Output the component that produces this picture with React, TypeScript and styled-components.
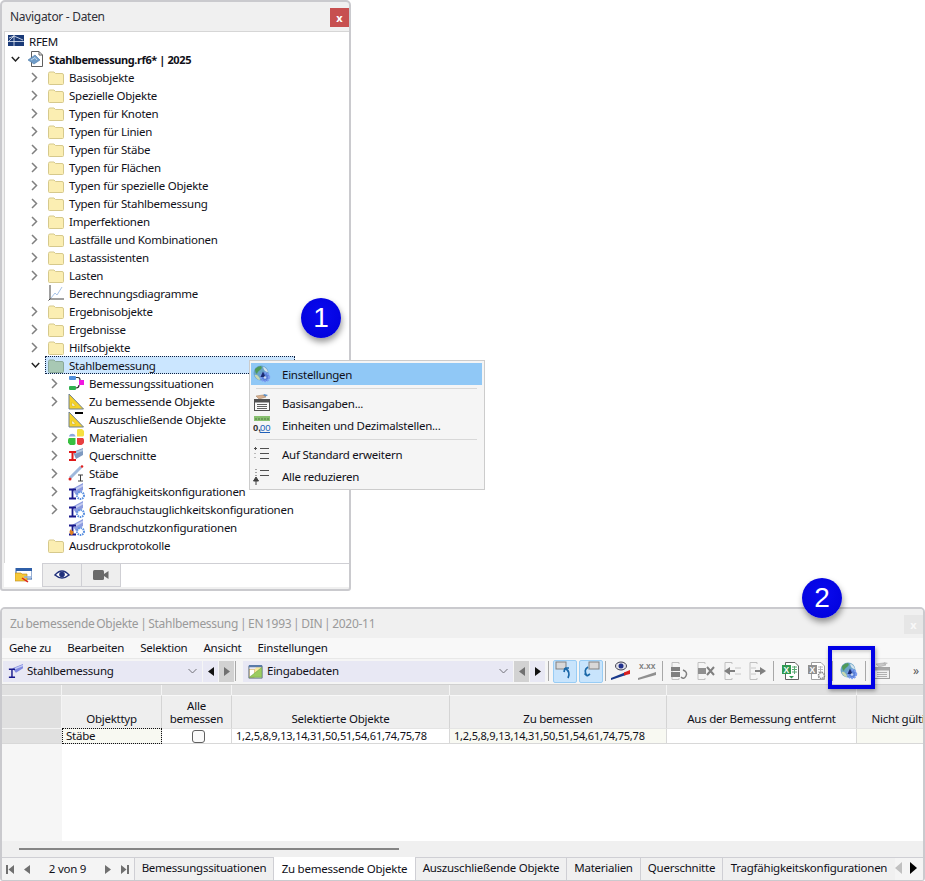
import React from "react";
import styled, { createGlobalStyle } from "styled-components";

const Global = createGlobalStyle`
  html, body { margin: 0; padding: 0; background: #fff; }
  body { font-family: "Noto Sans", "Liberation Sans", sans-serif; font-size: 11.5px; letter-spacing: -0.25px; color: #101018; }
  svg { display: block; flex: none; }
  svg text { letter-spacing: 0; }
`;

const Page = styled.div`
  position: relative;
  width: 925px;
  height: 881px;
  overflow: hidden;
  display: flex;
  flex-direction: column;
  background: #fff;
`;

/* ---------- Navigator ---------- */
const Navigator = styled.section`
  width: 351px;
  height: 591px;
  box-sizing: border-box;
  border: 2px solid #cacace;
  border-radius: 5px 5px 3px 3px;
  background: #f0f0f0;
  display: flex;
  flex-direction: column;
`;
const NavHeader = styled.header`
  height: 29px;
  flex: none;
  display: flex;
  align-items: center;
  justify-content: space-between;
  padding: 0 0 0 8px;
  font-size: 12px;
  letter-spacing: -0.3px;
  color: #303038;
`;
const CloseBox = styled.button<{ $idle?: boolean }>`
  width: 19px;
  height: 19px;
  margin-top: 1px;
  padding: 0;
  border: 0;
  background: ${(p) => (p.$idle ? "#e6e6e6" : "#c75050")};
  color: ${(p) => (p.$idle ? "#f8f8f8" : "#fff")};
  font: bold 11px "Noto Sans", sans-serif;
  line-height: 17px;
  text-align: center;
`;
const Tree = styled.div`
  flex: 1;
  margin: 0 0 0 2px;
  background: #fff;
  border: 1px solid #d6d6d6;
  border-right: 0;
  border-bottom: 0;
`;
const Row = styled.div<{ $level: number }>`
  height: 18px;
  display: flex;
  align-items: center;
  padding-left: ${(p) => 3 + p.$level * 20}px;
`;
const Slot = styled.span`
  width: 20px;
  height: 18px;
  flex: none;
  display: flex;
  align-items: center;
  padding-left: 3px;
  box-sizing: border-box;
`;
const RowContent = styled.span<{ $selected?: boolean }>`
  display: flex;
  align-items: center;
  height: 18px;
  box-sizing: border-box;
  margin-left: -3px;
  padding-left: 3px;
  gap: 5px;
  white-space: nowrap;
  ${(p) =>
    p.$selected &&
    `width: 250px; background: #cbe6ff; outline: 1px dotted #102040; outline-offset: -1px;`}
`;
const IconBox = styled.span`
  width: 16px;
  height: 18px;
  flex: none;
  display: flex;
  align-items: center;
`;
const Bold = styled.span`
  font-weight: 700;
  font-size: 11px;
  letter-spacing: -0.4px;
`;
const NavTabs = styled.nav`
  height: 24px;
  flex: none;
  display: flex;
  margin: 0 0 2px 2px;
`;
const NavTab = styled.button<{ $active?: boolean }>`
  width: 39px;
  box-sizing: border-box;
  padding: 0;
  display: flex;
  align-items: center;
  justify-content: center;
  background: ${(p) => (p.$active ? "#fff" : "#eeeeee")};
  border: 1px solid #cfcfd4;
  border-width: ${(p) => (p.$active ? "0 1px 0 0" : "1px 1px 1px 0")};
`;
const NavTabFill = styled.div`
  flex: 1;
  background: #fff;
  border-top: 1px solid #cfcfd4;
`;

/* ---------- Context menu ---------- */
const ContextMenu = styled.div`
  position: absolute;
  left: 249px;
  top: 360px;
  width: 236px;
  height: 130px;
  box-sizing: border-box;
  padding: 2px 2px 0 1px;
  background: #f5f5f5;
  border: 1px solid #cccccc;
`;
const MenuItem = styled.div<{ $active?: boolean }>`
  height: 22px;
  display: flex;
  align-items: center;
  padding-left: 2px;
  gap: 11px;
  background: ${(p) => (p.$active ? "#90c8f6" : "transparent")};
`;
const MenuRule = styled.div`
  height: 1px;
  margin: 3px 5px 3px 5px;
  background: #d8d8d8;
`;

/* ---------- Badges ---------- */
const Badge = styled.div<{ $x: number; $y: number }>`
  position: absolute;
  left: ${(p) => p.$x}px;
  top: ${(p) => p.$y}px;
  width: 40px;
  height: 40px;
  border-radius: 50%;
  background: radial-gradient(circle at 50% 40%, #0a0af0, #0000d8);
  color: #fff;
  font: 400 28px/39px "Liberation Sans", sans-serif;
  letter-spacing: 0;
  text-align: center;
  box-shadow: 1px 4px 6px rgba(0, 0, 0, 0.4);
`;
const Highlight = styled.div`
  position: absolute;
  left: 828px;
  top: 646px;
  width: 47px;
  height: 43px;
  box-sizing: border-box;
  border: 4px solid #0000e6;
  box-shadow: 1px 2px 4px rgba(0, 0, 0, 0.35), inset 0 2px 3px rgba(0, 0, 0, 0.15);
`;

/* ---------- Table panel ---------- */
const TablePanel = styled.section`
  width: 925px;
  height: 274px;
  margin-top: 16px;
  box-sizing: border-box;
  border: 2px solid #cacace;
  border-bottom-width: 1px;
  border-radius: 5px 5px 3px 3px;
  background: #f8f8f8;
  display: flex;
  flex-direction: column;
  overflow: hidden;
`;
const PanelHeader = styled.header`
  height: 29px;
  flex: none;
  display: flex;
  align-items: center;
  justify-content: space-between;
  padding: 0 0 0 8px;
  background: #f0f0f0;
  font-size: 12px;
  letter-spacing: -0.3px;
  word-spacing: -1px;
  color: #9a9a9a;
`;
const MenuBar = styled.div`
  height: 20px;
  flex: none;
  box-sizing: border-box;
  display: flex;
  align-items: center;
  gap: 16px;
  padding: 0 0 2px 7px;
  background: #f8f8f8;
`;
const Toolbar = styled.div`
  height: 27px;
  flex: none;
  box-sizing: border-box;
  display: flex;
  align-items: center;
  padding: 0 0 1px 1px;
  background: #f5f5f5;
  border-top: 1px solid #e8e8e8;
  border-bottom: 1px solid #d0d0d0;
  overflow: hidden;
`;
const Combo = styled.div<{ $width: number }>`
  width: ${(p) => p.$width}px;
  height: 21px;
  flex: none;
  box-sizing: border-box;
  display: flex;
  align-items: center;
  gap: 4px;
  padding: 0 5px 0 5px;
  background: #e8e8f4;
`;
const ComboText = styled.span`
  flex: 1;
  padding-bottom: 2px;
`;
const StepButton = styled.button<{ $dim?: boolean }>`
  width: 15px;
  height: 21px;
  flex: none;
  margin-left: 1px;
  padding: 0;
  border: 0;
  display: flex;
  align-items: center;
  justify-content: center;
  background: ${(p) => (p.$dim ? "#d2d2d2" : "#e8e8f4")};
`;
const ToolRule = styled.span<{ $left: number; $right: number }>`
  width: 1px;
  height: 20px;
  flex: none;
  margin: 0 ${(p) => p.$right}px 0 ${(p) => p.$left}px;
  background: #a8a8a8;
`;
const Toggle = styled.button`
  width: 24px;
  height: 23px;
  flex: none;
  margin-right: 2px;
  padding: 0;
  display: flex;
  align-items: center;
  justify-content: center;
  background: #c8e4fc;
  border: 1px solid #98ccf4;
  border-radius: 2px;
`;
const ToolIcon = styled.span<{ $gap?: number }>`
  width: 20px;
  height: 22px;
  flex: none;
  margin-right: ${(p) => p.$gap ?? 0}px;
  display: flex;
  align-items: center;
  justify-content: flex-start;
`;
const More = styled.span`
  margin-left: 20px;
  color: #555;
  font-size: 12px;
  line-height: 12px;
`;
const Grid = styled.div`
  height: 156px;
  flex: none;
  display: grid;
  grid-template-columns: 60px 100px 70px 218px 217px 190px 90px;
  grid-template-rows: 10px 33px 16px 1fr;
  background: #fff;
  overflow: hidden;
`;
const TopCell = styled.div`
  background: #e0e0e0;
  border-right: 1px solid #f4f4f4;
`;
const CornerCell = styled.div`
  background: #e0e0e0;
  border-right: 1px solid #f4f4f4;
  border-top: 1px solid #f4f4f4;
`;
const HeadCell = styled.div`
  box-sizing: border-box;
  background: #eeeeee;
  border-right: 1px solid #d4d4d4;
  border-top: 1px solid #f8f8f8;
  display: flex;
  align-items: flex-end;
  justify-content: center;
  text-align: center;
  line-height: 13px;
  padding-bottom: 3px;
  white-space: nowrap;
`;
const RowHead = styled.div`
  background: #e0e0e0;
  border-top: 1px solid #f4f4f4;
  border-bottom: 1px solid #d8d8d8;
`;
const DataCell = styled.div<{ $tint?: boolean; $focus?: boolean; $center?: boolean; $list?: boolean }>`
  box-sizing: border-box;
  display: flex;
  align-items: center;
  justify-content: ${(p) => (p.$center ? "center" : "flex-start")};
  padding: 0 0 ${(p) => (p.$center ? "0" : "2px")} 4px;
  white-space: nowrap;
  background: ${(p) => (p.$tint ? "#f8f9f2" : "#fff")};
  border-right: 1px solid #d8d8d8;
  border-top: 1px solid #e4e4e4;
  border-bottom: 1px solid #d8d8d8;
  ${(p) => p.$list && `font-size: 11px; letter-spacing: -0.2px;`}
  ${(p) => p.$focus && `outline: 1px dotted #101010; outline-offset: -1px;`}
`;
const CheckBox = styled.span`
  width: 13px;
  height: 13px;
  box-sizing: border-box;
  border: 1px solid #606060;
  border-radius: 3px;
  background: #fafafa;
`;
const FillerHead = styled.div`
  background: #f6f6f6;
`;
const FillerBody = styled.div`
  grid-column: 2 / -1;
  background: #fff;
`;
const ScrollRow = styled.div`
  height: 16px;
  flex: none;
  box-sizing: border-box;
  padding: 7px 0 0 17px;
  background: #f0f0f0;
`;
const ScrollThumb = styled.div`
  width: 380px;
  height: 2px;
  background: #858585;
`;
const TabBar = styled.div`
  flex: 1;
  display: flex;
  background: #f4f4f4;
  border-top: 1px solid #cfcfd4;
`;
const Pager = styled.div`
  width: 132px;
  flex: none;
  box-sizing: border-box;
  display: flex;
  align-items: center;
  justify-content: space-between;
  padding: 0 5px 0 4px;
`;
const PagerGroup = styled.span`
  display: flex;
  align-items: center;
  gap: 10px;
`;
const PagerText = styled.span`
  font-size: 11.5px;
  padding-bottom: 1px;
`;
const SheetTab = styled.div<{ $width: number; $active?: boolean }>`
  width: ${(p) => p.$width}px;
  flex: none;
  box-sizing: border-box;
  display: flex;
  align-items: center;
  justify-content: center;
  white-space: nowrap;
  padding-bottom: 3px;
  background: ${(p) => (p.$active ? "#fff" : "#f0f0f0")};
  border-left: 1px solid #cfcfd4;
  ${(p) => p.$active && `margin-top: -1px; padding-bottom: 1px;`}
`;
const TabArrows = styled.div`
  flex: 1;
  display: flex;
  align-items: center;
  justify-content: flex-end;
  gap: 8px;
  padding: 0 6px 2px 0;
`;

/* ---------- Icons ---------- */
const Chevron = ({ open }: { open?: boolean }) =>
  open ? (
    <svg width="9" height="7" viewBox="0 0 9 7">
      <path d="M.8 1 4.500 5 8.200 1" fill="none" stroke="#222" strokeWidth="1.500" />
    </svg>
  ) : (
    <svg width="7" height="11" viewBox="0 0 7 11">
      <path d="M1 1 5.500 5.500 1 10" fill="none" stroke="#808080" strokeWidth="1.500" />
    </svg>
  );
const ComboChevron = () => (
  <svg width="9" height="6" viewBox="0 0 9 6">
    <path d="M.5 1 4.500 5 8.500 1" fill="none" stroke="#707078" />
  </svg>
);
const Folder = ({ green }: { green?: boolean }) => (
  <svg width="16" height="16" viewBox="0 -1 16 16">
    <path
      d="M.5 3.500Q.5 2 2 2H6L7.500 3.500H14Q15.500 3.500 15.500 5V13.500Q15.500 14.500 14.500 14.500H1.500Q.5 14.500.5 13.500Z"
      fill={green ? "#a8c8b4" : "#fbeeb2"}
      stroke={green ? "#8aa898" : "#d6c98c"}
    />
  </svg>
);
const RfemLogo = () => (
  <svg width="16" height="12" viewBox="0 0 16 12">
    <rect width="16" height="11" fill="#1a3a78" />
    <path d="M0 6.500H16M6 0V11M1 6 6 1 15 5M6 1 1 3" stroke="#e8eef8" strokeWidth=".8" fill="none" />
  </svg>
);
const FileIcon = () => (
  <svg width="16" height="16" viewBox="0 0 16 16">
    <path d="M3.500.5H11L14.500 4V15.500H3.500Z" fill="#fff" stroke="#606060" />
    <path d="M11 .5V4H14.500" fill="none" stroke="#606060" />
    <path d="M0 9 7 4 12 9 6 13Z" fill="#6f9cc8" stroke="#4a78a8" strokeWidth=".6" />
    <path d="M3 9 7 6.500 9 9" fill="none" stroke="#dbe8f4" strokeWidth=".8" />
  </svg>
);
const SituationIcon = () => (
  <svg width="17" height="16" viewBox="0 0 17 16">
    <rect x="1" y="1" width="7" height="4" rx="1" fill="#4f8fdc" />
    <rect x="1" y="11" width="7" height="4" rx="1" fill="#30b050" />
    <rect x="11" y="5" width="5" height="5" fill="#f018e0" />
    <path d="M8 2.500H10Q12 2.500 12 5M11 10Q11 13 8 13" fill="none" stroke="#303030" strokeWidth="1.200" />
  </svg>
);
const SquareIcon = ({ dash }: { dash?: boolean }) => (
  <svg width="17" height="17" viewBox="0 0 17 17">
    <path d="M1 1V16H15.500Z" fill="#f6d22a" stroke="#6f8090" strokeWidth="1" />
    <path d="M4 9.500V13H7.500Z" fill="#fff" stroke="#c0a820" strokeWidth=".5" />
    {dash && <rect x="7" y="1" width="8" height="2" fill="#000" />}
  </svg>
);
const MaterialIcon = () => (
  <svg width="16" height="16" viewBox="0 0 16 16">
    <path d="M1 7A3.500 3.500 0 0 1 7.500 7V7.500H1Z" fill="#8ca8e0" />
    <path d="M9 .8A3.500 3.500 0 0 1 15 7.500H9Z" fill="#f6e040" />
    <path d="M1 9H7.500V15A3.500 3.500 0 0 1 1 9Z" fill="#38c040" />
    <path d="M9 9H15A3.500 3.500 0 0 1 9 15Z" fill="#e84040" />
  </svg>
);
const SectionIcon = () => (
  <svg width="17" height="16" viewBox="0 0 17 16">
    <path d="M5 5 15 1V8L8 12Z" fill="#7f9ac0" />
    <path d="M7 5 15 2V4L7 7Z" fill="#b4c8e0" />
    <path d="M1 5H8M1 13H8M4.500 5V13" stroke="#e01818" strokeWidth="2" fill="none" />
  </svg>
);
const MemberIcon = () => (
  <svg width="17" height="17" viewBox="0 0 17 17">
    <path d="M2 13 13 2" stroke="#9fb8dc" strokeWidth="3" />
    <circle cx="2" cy="14" r="1.500" fill="#e02020" />
    <circle cx="14" cy="1.500" r="1.300" fill="#e02020" />
    <path d="M10 10H15M10 16H15M12.500 10V16" stroke="#404040" strokeWidth="1" fill="none" />
  </svg>
);
const ConfigIcon = ({ fire }: { fire?: boolean }) => (
  <svg width="17" height="17" viewBox="0 0 17 17">
    <path d="M4 6 15 0V7L8 12Z" fill="#8c9ce0" />
    <path d="M6 6 15 1.500V3.500L6 8.500Z" fill="#c4ccf0" />
    <circle cx="12.500" cy="12.500" r="3.500" fill="none" stroke="#5a90e0" strokeWidth="2" strokeDasharray="1.500 .8" />
    <path d="M1 6.500H8M1 15.500H8M4.500 6.500V15.500" stroke="#18188c" strokeWidth="1.800" fill="none" />
    {fire && <path d="M3 16Q0 13 3 10Q3 12 5 12Q6.500 14 4 16Z" fill="#e08020" />}
  </svg>
);
const DiagramIcon = () => (
  <svg width="16" height="16" viewBox="0 0 16 16">
    <path d="M2 0V14H16" fill="none" stroke="#404040" />
    <path d="M.5 15.500 2 14" stroke="#404040" />
    <path d="M3 13 7 8 9 10 14 2" fill="none" stroke="#a8c4e8" />
  </svg>
);
const GlobeGear = () => (
  <svg width="18" height="18" viewBox="0 0 18 18">
    <circle cx="8" cy="8" r="7.500" fill="#6aa4c8" />
    <path d="M2 4Q5 1 8 1Q10 3 7 5T4 9Q2 8 2 4Z" fill="#4f9a58" />
    <path d="M10 1.500Q14 3 15 7Q11 7 10 1.500Z" fill="#d8e4ec" />
    <path d="M1.500 10Q4 9 6 12T6 15Q3 14 1.500 10Z" fill="#c8d8b0" />
    <circle cx="12" cy="12" r="4.200" fill="#5a80d8" stroke="#7c9cf0" strokeWidth="2" strokeDasharray="1.800 .9" />
    <path d="M10 6.500 7.500 12H12.500Z" fill="#1a2a70" />
    <circle cx="12" cy="12.500" r="1.300" fill="#c8d8f4" />
  </svg>
);
const SheetIcon = ({ gray }: { gray?: boolean }) => (
  <svg width="18" height="18" viewBox="0 0 18 18">
    <path d="M11 0 15 1 12 3 8 4Z" fill={gray ? "#bdbdbd" : "#5a90c8"} />
    <path d="M3 2 10 1 13 3 6 5Z" fill={gray ? "#c8c8c8" : "#d8b090"} stroke={gray ? "#a0a0a0" : "#a08060"} strokeWidth=".5" />
    <rect x="1.500" y="5.500" width="15" height="11" fill={gray ? "#f0f0f0" : "#fafafa"} stroke={gray ? "#a0a0a0" : "#505050"} />
    <rect x="1.500" y="5.500" width="15" height="3" fill={gray ? "#a8a8a8" : "#505050"} />
    <path d="M4 10.500H14M4 12.500H14M4 14.500H14" stroke={gray ? "#b0b0b0" : "#606060"} />
  </svg>
);
const UnitsIcon = () => (
  <svg width="18" height="18" viewBox="0 0 18 18">
    <rect x="1" y="0" width="16" height="5" fill="#88c070" />
    <path d="M3 2V4M6 2V4M9 2V4M12 2V4M15 2V4" stroke="#507840" />
    <text x="0" y="14.500" fontFamily="Liberation Sans" fontSize="9.500" fontWeight="700" fill="#303030">0,</text>
    <text x="7" y="14.500" fontFamily="Liberation Sans" fontSize="9.500" fill="#2060b8">00</text>
    <path d="M7 16.500H17" stroke="#2060b8" />
  </svg>
);
const ExpandIcon = () => (
  <svg width="18" height="18" viewBox="0 0 18 18">
    <path d="M7 3.500H16M7 8.500H16M7 13.500H16" stroke="#505050" />
    <path d="M1 3.500H4M2.500 2V5" stroke="#505050" />
    <path d="M2 9V8M2 13V12" stroke="#808080" />
  </svg>
);
const CollapseIcon = () => (
  <svg width="18" height="18" viewBox="0 0 18 18">
    <path d="M7 3.500H16M7 8.500H16" stroke="#505050" />
    <path d="M3 2V3M3 5V6M3 8V9" stroke="#505050" />
    <path d="M3 10 .5 14H5.500ZM3 14V18" fill="#404040" stroke="#404040" />
  </svg>
);
const EyeTabIcon = () => (
  <svg width="16" height="12" viewBox="0 0 16 12">
    <path d="M1 6Q8-2 15 6Q8 12 1 6Z" fill="#fff" stroke="#20307c" strokeWidth="1.500" />
    <circle cx="8" cy="5.500" r="2.800" fill="#20307c" />
  </svg>
);
const CameraIcon = () => (
  <svg width="16" height="12" viewBox="0 0 16 12">
    <rect x="0" y="1" width="11" height="10" rx="1.500" fill="#6a6a6a" />
    <path d="M11 5 15.500 2V10L11 7Z" fill="#6a6a6a" />
  </svg>
);
const DataTabIcon = () => (
  <svg width="15" height="15" viewBox="0 0 16 17">
    <path d="M1 15H15V3H9Z" fill="#f8e8a0" />
    <rect x="1" y="6" width="6" height="9" fill="#fff" stroke="#c89020" strokeWidth=".5" />
    <path d="M.5 2.500H15.500V16H.5Z" fill="none" stroke="#5a6a7a" />
    <path d="M.5 2.500H15.500" stroke="#5a7aa8" strokeWidth="2.500" />
    <path d="M1 15 15 4V15Z" fill="#9ccc60" stroke="#58a040" strokeWidth=".5" />
  </svg>
);
const BeamTinyIcon = () => (
  <svg width="15" height="16" viewBox="0 0 17 18">
    <path d="M5 6 17 1V6L9 11Z" fill="#7f88e0" />
    <path d="M7 6 17 2V3.500L7 7.500Z" fill="#c4ccf4" />
    <path d="M1 7H8M1 16H8M4.500 7V16" stroke="#18188c" strokeWidth="1.600" fill="none" />
  </svg>
);
const SmallTriangle = ({ dir, color }: { dir: "l" | "r"; color: string }) => (
  <svg width="6" height="9" viewBox="0 0 6 9">
    <path d={dir === "l" ? "M6 0V9L0 4.500Z" : "M0 0V9L6 4.500Z"} fill={color} />
  </svg>
);
const BigTriangle = ({ dir, color }: { dir: "l" | "r"; color: string }) => (
  <svg width="7" height="12" viewBox="0 0 7 12">
    <path d={dir === "l" ? "M7 0V12L0 6Z" : "M0 0V12L7 6Z"} fill={color} />
  </svg>
);
const PagerEnd = ({ dir }: { dir: "l" | "r" }) => (
  <svg width="8" height="9" viewBox="0 0 8 9">
    <path d={dir === "l" ? "M0 0H2V9H0ZM8 0V9L2.500 4.500Z" : "M8 0H6V9H8ZM0 0V9L5.500 4.500Z"} fill="#707070" />
  </svg>
);
const TurnIcon = ({ down }: { down?: boolean }) => (
  <svg width="20" height="20" viewBox="0 0 20 20">
    <rect x={down ? 8 : 1} y="1" width="10" height="7" fill="#d8d8d8" stroke="#808080" />
    {down ? (
      <path d="M7 6Q2 9 6 15M6 15 3.500 12.500M6 15 9 13" fill="none" stroke="#1a68a8" strokeWidth="1.700" />
    ) : (
      <path d="M13 17Q16 11 10 7M10 7 9 11M10 7 14 7" fill="none" stroke="#1a68a8" strokeWidth="1.700" />
    )}
  </svg>
);
const EyeWedge = () => (
  <svg width="20" height="20" viewBox="0 0 20 20">
    <path d="M0 17 15 11V14L0 19Z" fill="#1a3a8c" />
    <path d="M13 11.500 19 9V13L13 14.500Z" fill="#d82020" />
    <ellipse cx="10" cy="5" rx="5.500" ry="4" fill="#e0e0e8" stroke="#404050" />
    <circle cx="10" cy="5" r="2.500" fill="#20308c" />
  </svg>
);
const DecimalWedge = () => (
  <svg width="20" height="20" viewBox="0 0 20 20">
    <text x="1" y="8" fontFamily="Liberation Sans" fontSize="8.500" fontWeight="700" fill="#808080">x.xx</text>
    <path d="M0 17 18 11V14L0 19Z" fill="#909090" />
  </svg>
);
const GrayRows = ({ kind }: { kind: number }) => (
  <svg width="20" height="20" viewBox="0 0 20 20">
    <path d="M2 1.500H9V3M2 18.500H9V17" fill="none" stroke="#c0c0c0" />
    <path d="M2 1.500V18.500" stroke="#c0c0c0" />
    {kind === 0 && (
      <g>
        <rect x="1" y="6" width="9" height="4" fill="#808080" />
        <rect x="1" y="11" width="9" height="5" fill="#808080" />
        <path d="M13 9Q18 11 16 15T11 16" fill="none" stroke="#808080" strokeWidth="1.500" />
      </g>
    )}
    {kind === 1 && (
      <g>
        <rect x="2" y="7" width="8" height="6" fill="#909090" />
        <path d="M11 6 18 14M18 6 11 14" stroke="#808080" strokeWidth="2" />
      </g>
    )}
    {kind === 2 && (
      <g>
        <path d="M1 10 7 6V14Z" fill="#808080" />
        <path d="M7 10H12" stroke="#808080" strokeWidth="2" />
        <path d="M12 7H18M12 13H18" stroke="#c8c8c8" />
      </g>
    )}
    {kind === 3 && (
      <g>
        <path d="M18 10 12 6V14Z" fill="#808080" />
        <path d="M7 10H12" stroke="#808080" strokeWidth="2" />
        <path d="M3 7H8M3 13H8" stroke="#c8c8c8" />
      </g>
    )}
  </svg>
);
const ExcelIcon = ({ gray }: { gray?: boolean }) => (
  <svg width="20" height="20" viewBox="0 0 20 20">
    <path d="M4.500 1.500H14L17.500 5V18.500H4.500Z" fill="#fff" stroke={gray ? "#a0a0a0" : "#606060"} />
    <rect x="1" y="4" width="9" height="9" fill={gray ? "#909090" : "#2f9a50"} />
    <text x="2.500" y="11.500" fontFamily="Liberation Sans" fontSize="8.500" fontWeight="700" fill="#fff">X</text>
    <path d="M11 6H16M11 8.500H16M11 11H16M13.500 5V13" stroke={gray ? "#b8b8b8" : "#58a870"} />
    {gray ? (
      <circle cx="14.500" cy="14.500" r="3" fill="#f5f5f5" stroke="#808080" strokeWidth="1.600" strokeDasharray="1.500 .8" />
    ) : (
      <path d="M8 15H13L10.500 17.500Z" fill="#2f9a50" />
    )}
  </svg>
);
const NavTabIcon = () => (
  <svg width="17" height="15" viewBox="0 0 17 15">
    <rect x="1" y="0" width="16" height="11" fill="#fff" stroke="#2f5fa8" />
    <rect x="1" y="0" width="16" height="3" fill="#2f5fa8" />
    <path d="M0 5H6L7 6H12V13H0Z" fill="#f6c838" stroke="#b88818" strokeWidth=".6" />
    <path d="M7 10 13 14" stroke="#e02020" strokeWidth="1.500" />
    <path d="M9 9H16" stroke="#8cb0e0" strokeWidth="1.500" />
  </svg>
);

/* ---------- Data ---------- */
type Node = { label: string; level: number; icon: React.ReactNode; arrow?: "open" | "closed" };
const folders = [
  "Basisobjekte",
  "Spezielle Objekte",
  "Typen für Knoten",
  "Typen für Linien",
  "Typen für Stäbe",
  "Typen für Flächen",
  "Typen für spezielle Objekte",
  "Typen für Stahlbemessung",
  "Imperfektionen",
  "Lastfälle und Kombinationen",
  "Lastassistenten",
  "Lasten",
];
const nodes: Node[] = [
  ...folders.map((label): Node => ({ label, level: 1, icon: <Folder />, arrow: "closed" })),
  { label: "Berechnungsdiagramme", level: 1, icon: <DiagramIcon /> },
  { label: "Ergebnisobjekte", level: 1, icon: <Folder />, arrow: "closed" },
  { label: "Ergebnisse", level: 1, icon: <Folder />, arrow: "closed" },
  { label: "Hilfsobjekte", level: 1, icon: <Folder />, arrow: "closed" },
];
const steelNodes: Node[] = [
  { label: "Bemessungssituationen", level: 2, icon: <SituationIcon />, arrow: "closed" },
  { label: "Zu bemessende Objekte", level: 2, icon: <SquareIcon />, arrow: "closed" },
  { label: "Auszuschließende Objekte", level: 2, icon: <SquareIcon dash /> },
  { label: "Materialien", level: 2, icon: <MaterialIcon />, arrow: "closed" },
  { label: "Querschnitte", level: 2, icon: <SectionIcon />, arrow: "closed" },
  { label: "Stäbe", level: 2, icon: <MemberIcon />, arrow: "closed" },
  { label: "Tragfähigkeitskonfigurationen", level: 2, icon: <ConfigIcon />, arrow: "closed" },
  { label: "Gebrauchstauglichkeitskonfigurationen", level: 2, icon: <ConfigIcon />, arrow: "closed" },
  { label: "Brandschutzkonfigurationen", level: 2, icon: <ConfigIcon fire /> },
  { label: "Ausdruckprotokolle", level: 1, icon: <Folder /> },
];
const renderNode = (n: Node) => (
  <Row key={n.label} $level={n.level}>
    <Slot>{n.arrow && <Chevron open={n.arrow === "open"} />}</Slot>
    <RowContent>
      <IconBox>{n.icon}</IconBox>
      {n.label}
    </RowContent>
  </Row>
);
const sheets = [
  { label: "Bemessungssituationen", width: 139 },
  { label: "Zu bemessende Objekte", width: 142, active: true },
  { label: "Auszuschließende Objekte", width: 151 },
  { label: "Materialien", width: 74 },
  { label: "Querschnitte", width: 82 },
  { label: "Tragfähigkeitskonfigurationen", width: 173 },
];
const OBJECTS = "1,2,5,8,9,13,14,31,50,51,54,61,74,75,78";

export default function App() {
  return (
    <Page>
      <Global />
      <Navigator>
        <NavHeader>
          Navigator - Daten
          <CloseBox>x</CloseBox>
        </NavHeader>
        <Tree>
          <Row $level={0}>
            <RowContent>
              <IconBox>
                <RfemLogo />
              </IconBox>
              RFEM
            </RowContent>
          </Row>
          <Row $level={0}>
            <Slot>
              <Chevron open />
            </Slot>
            <RowContent>
              <IconBox>
                <FileIcon />
              </IconBox>
              <Bold>Stahlbemessung.rf6* | 2025</Bold>
            </RowContent>
          </Row>
          {nodes.map(renderNode)}
          <Row $level={1}>
            <Slot>
              <Chevron open />
            </Slot>
            <RowContent $selected>
              <IconBox>
                <Folder green />
              </IconBox>
              Stahlbemessung
            </RowContent>
          </Row>
          {steelNodes.map(renderNode)}
        </Tree>
        <NavTabs>
          <NavTab $active>
            <NavTabIcon />
          </NavTab>
          <NavTab>
            <EyeTabIcon />
          </NavTab>
          <NavTab>
            <CameraIcon />
          </NavTab>
          <NavTabFill />
        </NavTabs>
      </Navigator>

      <TablePanel>
        <PanelHeader>
          Zu bemessende Objekte | Stahlbemessung | EN 1993 | DIN | 2020-11
          <CloseBox $idle>x</CloseBox>
        </PanelHeader>
        <MenuBar>
          <span>Gehe zu</span>
          <span>Bearbeiten</span>
          <span>Selektion</span>
          <span>Ansicht</span>
          <span>Einstellungen</span>
        </MenuBar>
        <Toolbar>
          <Combo $width={199}>
            <BeamTinyIcon />
            <ComboText>Stahlbemessung</ComboText>
            <ComboChevron />
          </Combo>
          <StepButton>
            <SmallTriangle dir="l" color="#111" />
          </StepButton>
          <StepButton $dim>
            <SmallTriangle dir="r" color="#707070" />
          </StepButton>
          <ToolRule $left={1} $right={7} />
          <Combo $width={270}>
            <DataTabIcon />
            <ComboText>Eingabedaten</ComboText>
            <ComboChevron />
          </Combo>
          <StepButton $dim>
            <SmallTriangle dir="l" color="#707070" />
          </StepButton>
          <StepButton>
            <SmallTriangle dir="r" color="#111" />
          </StepButton>
          <ToolRule $left={3} $right={4} />
          <Toggle>
            <TurnIcon />
          </Toggle>
          <Toggle>
            <TurnIcon down />
          </Toggle>
          <ToolRule $left={0} $right={5} />
          <ToolIcon $gap={7}>
            <EyeWedge />
          </ToolIcon>
          <ToolIcon>
            <DecimalWedge />
          </ToolIcon>
          <ToolRule $left={4} $right={7} />
          <ToolIcon $gap={6}>
            <GrayRows kind={0} />
          </ToolIcon>
          <ToolIcon $gap={7}>
            <GrayRows kind={1} />
          </ToolIcon>
          <ToolIcon $gap={5}>
            <GrayRows kind={2} />
          </ToolIcon>
          <ToolIcon>
            <GrayRows kind={3} />
          </ToolIcon>
          <ToolRule $left={5} $right={7} />
          <ToolIcon $gap={6}>
            <ExcelIcon />
          </ToolIcon>
          <ToolIcon>
            <ExcelIcon gray />
          </ToolIcon>
          <ToolRule $left={5} $right={7} />
          <ToolIcon>
            <GlobeGear />
          </ToolIcon>
          <ToolRule $left={5} $right={7} />
          <ToolIcon>
            <SheetIcon gray />
          </ToolIcon>
          <More>»</More>
        </Toolbar>
        <Grid>
          <TopCell />
          <TopCell />
          <TopCell />
          <TopCell />
          <TopCell />
          <TopCell />
          <TopCell />
          <CornerCell />
          <HeadCell>Objekttyp</HeadCell>
          <HeadCell>
            Alle
            <br />
            bemessen
          </HeadCell>
          <HeadCell>Selektierte Objekte</HeadCell>
          <HeadCell>Zu bemessen</HeadCell>
          <HeadCell>Aus der Bemessung entfernt</HeadCell>
          <HeadCell>Nicht gültig</HeadCell>
          <RowHead />
          <DataCell $tint $focus>
            Stäbe
          </DataCell>
          <DataCell $center>
            <CheckBox />
          </DataCell>
          <DataCell $list>{OBJECTS}</DataCell>
          <DataCell $list $tint>
            {OBJECTS}
          </DataCell>
          <DataCell />
          <DataCell $tint />
          <FillerHead />
          <FillerBody />
        </Grid>
        <ScrollRow>
          <ScrollThumb />
        </ScrollRow>
        <TabBar>
          <Pager>
            <PagerGroup>
              <PagerEnd dir="l" />
              <SmallTriangle dir="l" color="#707070" />
            </PagerGroup>
            <PagerText>2 von 9</PagerText>
            <PagerGroup>
              <SmallTriangle dir="r" color="#707070" />
              <PagerEnd dir="r" />
            </PagerGroup>
          </Pager>
          {sheets.map((s) => (
            <SheetTab key={s.label} $width={s.width} $active={s.active}>
              {s.label}
            </SheetTab>
          ))}
          <TabArrows>
            <BigTriangle dir="l" color="#c0c0c0" />
            <BigTriangle dir="r" color="#000" />
          </TabArrows>
        </TabBar>
      </TablePanel>

      <ContextMenu>
        <MenuItem $active>
          <GlobeGear />
          Einstellungen
        </MenuItem>
        <MenuRule />
        <MenuItem>
          <SheetIcon />
          Basisangaben...
        </MenuItem>
        <MenuItem>
          <UnitsIcon />
          Einheiten und Dezimalstellen...
        </MenuItem>
        <MenuRule />
        <MenuItem>
          <ExpandIcon />
          Auf Standard erweitern
        </MenuItem>
        <MenuItem>
          <CollapseIcon />
          Alle reduzieren
        </MenuItem>
      </ContextMenu>
      <Badge $x={301} $y={298}>1</Badge>
      <Badge $x={802} $y={578}>2</Badge>
      <Highlight />
    </Page>
  );
}
